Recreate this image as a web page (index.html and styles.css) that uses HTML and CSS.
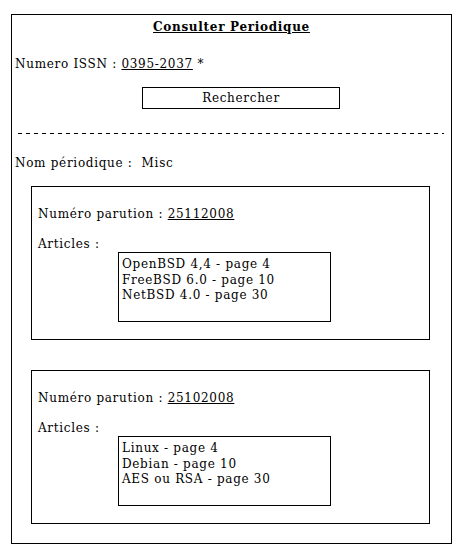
FILE: index.html
```html
<!DOCTYPE html>
<html lang="fr">
<head>
<meta charset="utf-8">
<title>Consulter Periodique</title>
<link rel="stylesheet" href="styles.css">
</head>
<body>
<div class="page">
  <div class="title">Consulter Periodique</div>
  <div class="issn">Numero ISSN : <span class="u">0395-2037</span> *</div>
  <div class="btn">Rechercher</div>
  <div class="sep"></div>
  <div class="nom">Nom périodique :&nbsp; Misc</div>

  <div class="card">
    <div class="line">Numéro parution : <span class="u">25112008</span></div>
    <div class="line articles">Articles :</div>
    <div class="list">
      <div>OpenBSD 4,4 - page 4</div>
      <div>FreeBSD 6.0 - page 10</div>
      <div>NetBSD 4.0 - page 30</div>
    </div>
  </div>

  <div class="card card2">
    <div class="line">Numéro parution : <span class="u">25102008</span></div>
    <div class="line articles">Articles :</div>
    <div class="list">
      <div>Linux - page 4</div>
      <div>Debian - page 10</div>
      <div>AES ou RSA - page 30</div>
    </div>
  </div>
</div>
</body>
</html>
```

FILE: styles.css
```css
html, body {
  background: #fff;
}
body {
  margin: 0;
  padding: 14px 0 0 11px;
  font-family: "DejaVu Serif", serif;
  font-size: 12px;
  letter-spacing: 0.7px;
  color: #000;
}
.page {
  width: 439px;
  height: 528px;
  border: 1px solid #000;
}
.u {
  text-decoration: underline;
}
.title {
  margin-top: 4px;
  line-height: 16px;
  text-align: center;
  font-weight: bold;
  text-decoration: underline;
}
.issn {
  margin: 21px 0 0 3px;
  line-height: 16px;
}
.btn {
  margin: 15px 0 0 130px;
  width: 196px;
  height: 20px;
  line-height: 20px;
  border: 1px solid #000;
  text-align: center;
}
.sep {
  margin: 24px 0 0 6px;
  width: 426px;
  height: 1px;
  background: repeating-linear-gradient(to right, #000 0 4px, transparent 4px 8px);
}
.nom {
  margin: 21px 0 0 3px;
  line-height: 16px;
}
.card {
  margin: 15px 0 0 19px;
  width: 391px;
  padding: 19px 0 17px 6px;
  border: 1px solid #000;
}
.card2 {
  margin-top: 30px;
}
.line {
  line-height: 16px;
}
.articles {
  margin-top: 14px;
}
.list {
  margin: 0 0 0 80px;
  width: 205px;
  height: 64px;
  padding: 4px 3px 0 3px;
  border: 1px solid #000;
  line-height: 15.5px;
}
```
